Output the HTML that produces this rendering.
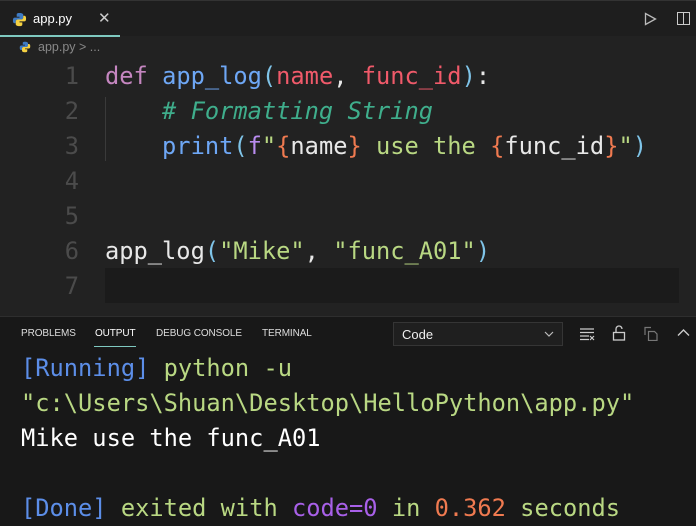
<!DOCTYPE html>
<html><head><meta charset="utf-8"><style>
*{margin:0;padding:0;box-sizing:border-box}
body{width:696px;height:526px;overflow:hidden;background:#222;font-family:"Liberation Sans",sans-serif;position:relative}
.tabbar{position:absolute;left:0;top:0;width:696px;height:36px;background:#1e1e1e;border-top:1px solid #333}
.tab{position:absolute;left:0;top:0;width:120px;height:36px;background:#1e1e1e;border-bottom:2px solid #7fc9c0}
.tab .t{position:absolute;left:33px;top:10px;color:#fff;font-size:13px}
.tab .x{position:absolute;left:98px;top:8px;color:#ccc;font-size:15px}
.bc{position:absolute;left:38px;top:40px;color:#888;font-size:12.5px}
.code{position:absolute;left:0;top:59px;font-family:"DejaVu Sans Mono",monospace;font-size:23.7px;line-height:35px;white-space:pre}
.ln{position:absolute;left:0;width:79px;text-align:right;color:#4b4b4b}
.cl{position:absolute;left:105px;width:574px;height:35px}
.cur{position:absolute;left:105px;top:268px;width:574px;height:35px;background:#1b1b1b}
.guide{position:absolute;left:105px;top:97px;width:1px;height:64px;background:#3a3a3a}
.k{color:#c586c0}.f{color:#6ea7f5}.p{color:#f05a6a}.c{color:#3fae8c;font-style:italic}.w{color:#e8e8e8}.br{color:#7fc4e8}.s{color:#b9d883}.o{color:#f07a50}.fb{color:#b98cf0}
.panel{position:absolute;left:0;top:316px;width:696px;height:210px;background:#181818;border-top:1px solid #2e2e2e}
.pt{position:absolute;top:11px;font-size:10px;color:#ddd;letter-spacing:-0.1px}
.out{position:absolute;left:21px;top:351px;font-family:"DejaVu Sans Mono",monospace;font-size:23.7px;line-height:35px;white-space:pre;color:#e8e8e8}
.sel{position:absolute;left:393px;top:322px;width:170px;height:24px;background:#1f1f1f;border:1px solid #353535;color:#eee;font-size:13px;padding:4px 8px}
</style></head><body>
<div class="tabbar"><div class="tab">
<svg style="position:absolute;left:12px;top:11px" width="15" height="15" viewBox="0 0 16 16"><path d="M8 1C5 1 5 2 5 3v2h3v1H3C1.5 6 1 7 1 9s.5 3 2 3h1V10c0-1 1-2 2-2h4c1 0 2-1 2-2V3c0-1-1-2-4-2z" fill="#3e7bc4"/><path d="M8 15c3 0 3-1 3-2v-2H8v-1h5c1.5 0 2-1 2-3s-.5-3-2-3h-1v2c0 1-1 2-2 2H6c-1 0-2 1-2 2v3c0 1 1 2 4 2z" fill="#f5d142"/></svg>
<span class="t">app.py</span><span class="x">✕</span></div>
<svg style="position:absolute;left:644px;top:11px" width="13" height="14" viewBox="0 0 13 14"><path d="M1.5 1.5v11l10-5.5z" fill="none" stroke="#bbb" stroke-width="1.3"/></svg>
<svg style="position:absolute;left:677px;top:11px" width="13" height="13" viewBox="0 0 13 13"><rect x="0.5" y="0.5" width="12" height="12" fill="none" stroke="#ccc"/><line x1="6.5" y1="1" x2="6.5" y2="12" stroke="#ccc"/></svg>
</div>
<svg style="position:absolute;left:19px;top:41px" width="12" height="12" viewBox="0 0 16 16"><path d="M8 1C5 1 5 2 5 3v2h3v1H3C1.5 6 1 7 1 9s.5 3 2 3h1V10c0-1 1-2 2-2h4c1 0 2-1 2-2V3c0-1-1-2-4-2z" fill="#3e7bc4"/><path d="M8 15c3 0 3-1 3-2v-2H8v-1h5c1.5 0 2-1 2-3s-.5-3-2-3h-1v2c0 1-1 2-2 2H6c-1 0-2 1-2 2v3c0 1 1 2 4 2z" fill="#f5d142"/></svg>
<div class="bc">app.py &gt; ...</div>
<div class="cur"></div><div class="guide"></div>
<div class="code">
<div class="ln" style="top:0">1</div><div class="ln" style="top:35px">2</div><div class="ln" style="top:70px">3</div><div class="ln" style="top:105px">4</div><div class="ln" style="top:140px">5</div><div class="ln" style="top:175px">6</div><div class="ln" style="top:210px">7</div>
<div class="cl" style="top:0"><span class="k">def</span> <span class="f">app_log</span><span class="br">(</span><span class="p">name</span><span class="w">, </span><span class="p">func_id</span><span class="br">)</span><span class="w">:</span></div>
<div class="cl" style="top:35px">    <span class="c"># Formatting String</span></div>
<div class="cl" style="top:70px">    <span class="f">print</span><span class="br">(</span><span class="fb">f</span><span class="s">"</span><span class="o">{</span><span class="w">name</span><span class="o">}</span><span class="s"> use the </span><span class="o">{</span><span class="w">func_id</span><span class="o">}</span><span class="s">"</span><span class="br">)</span></div>
<div class="cl" style="top:175px"><span class="w">app_log</span><span class="br">(</span><span class="s">"Mike"</span><span class="w">, </span><span class="s">"func_A01"</span><span class="br">)</span></div>
</div>
<div class="panel">
<span class="pt" style="left:21px">PROBLEMS</span>
<span class="pt" style="left:95px;color:#fff">OUTPUT</span>
<div style="position:absolute;left:94px;top:29px;width:42px;height:1px;background:#7fc9c0"></div>
<span class="pt" style="left:156px">DEBUG CONSOLE</span>
<span class="pt" style="left:262px">TERMINAL</span>
<svg style="position:absolute;left:580px;top:11px" width="15" height="13" viewBox="0 0 15 13"><path d="M0 1h14M0 4.5h14M0 8h9M0 11.5h9M10 8l4 4M14 8l-4 4" stroke="#ccc" stroke-width="1.2"/></svg>
<svg style="position:absolute;left:612px;top:8px" width="14" height="16" viewBox="0 0 14 16"><rect x="1.5" y="7.5" width="11" height="7.5" fill="none" stroke="#ccc" stroke-width="1.3"/><path d="M4 7.5V4a3 3 0 0 1 6 0" fill="none" stroke="#ccc" stroke-width="1.3"/></svg>
<svg style="position:absolute;left:644px;top:9px" width="14" height="15" viewBox="0 0 14 15"><path d="M4.5 5.5h6l2.5 2.5v6.5h-8.5zM1 9V1.5h6" fill="none" stroke="#777" stroke-width="1.2"/></svg>
<svg style="position:absolute;left:677px;top:11px" width="13" height="9" viewBox="0 0 13 9"><path d="M1 7.5l5.5-5.5 5.5 5.5" fill="none" stroke="#ccc" stroke-width="1.4"/></svg>
</div>
<div class="sel">Code<svg style="position:absolute;right:8px;top:8px" width="10" height="6" viewBox="0 0 10 6"><path d="M1 1l4 4 4-4" fill="none" stroke="#bbb" stroke-width="1.2"/></svg></div>
<div class="out"><span style="color:#5c8ee8">[Running]</span> <span class="s">python -u</span>
<span class="s">"c:\Users\Shuan\Desktop\HelloPython\app.py"</span>
<span style="color:#fff">Mike use the func_A01</span>

<span style="color:#5c8ee8">[Done]</span> <span class="s">exited with </span><span style="color:#a860e8">code=0</span><span class="s"> in </span><span style="color:#f07a50">0.362</span><span class="s"> seconds</span></div>
</body></html>
